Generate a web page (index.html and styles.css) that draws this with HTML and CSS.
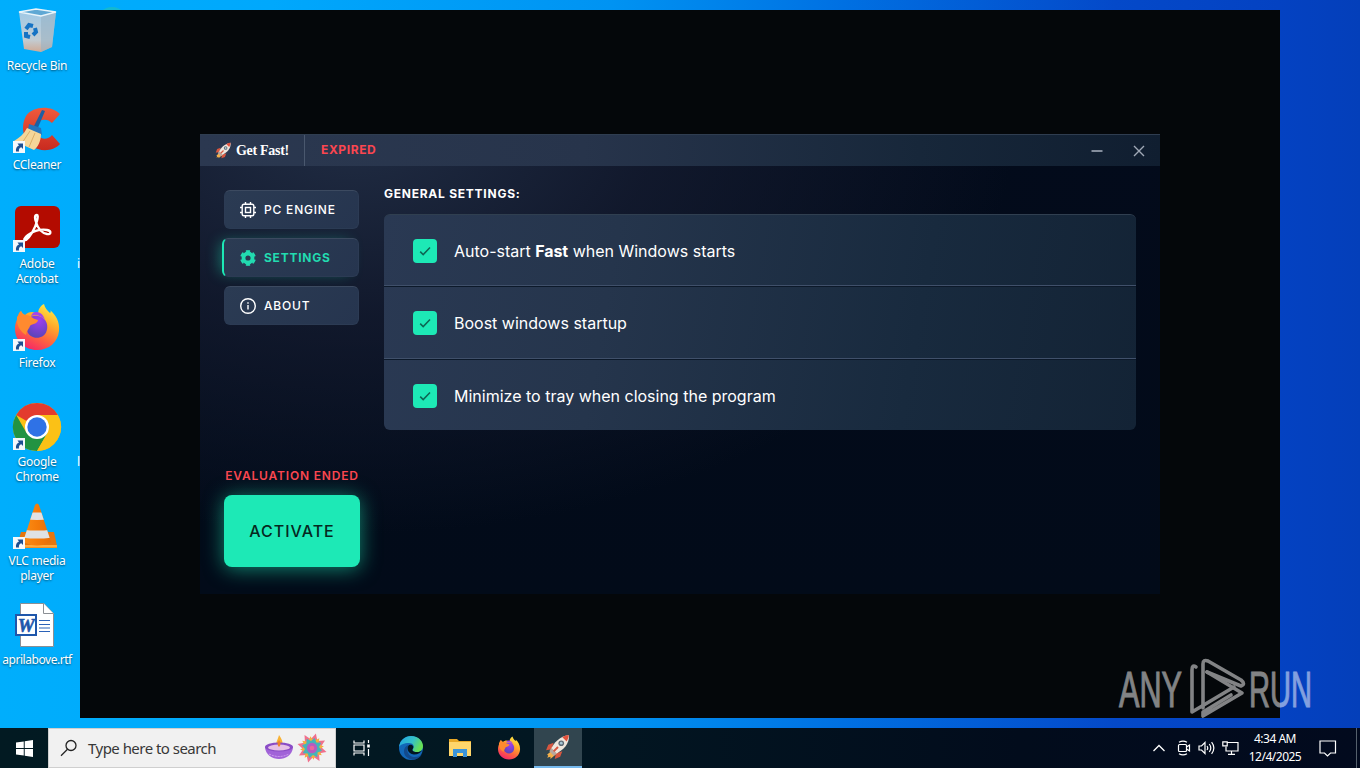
FILE: index.html
```
<!DOCTYPE html>
<html lang="en">
<head>
    <meta charset="UTF-8">
    <meta name="viewport" content="width=device-width, initial-scale=1.0">
    <title>Get Fast!</title>
    <link rel="stylesheet" href="styles.css">
</head>
<body>
    <!-- shared icons -->
    <svg class="defs" width="0" height="0">
        <defs>
            <linearGradient id="foxBody" x1="0.8" y1="0" x2="0.3" y2="1">
                <stop offset="0" stop-color="#fff04a"/>
                <stop offset="0.35" stop-color="#ffae2b"/>
                <stop offset="0.65" stop-color="#ff6a3c"/>
                <stop offset="1" stop-color="#f5246a"/>
            </linearGradient>
            <radialGradient id="foxGlobe" cx="0.6" cy="0.2" r="0.8">
                <stop offset="0" stop-color="#a03df0"/>
                <stop offset="1" stop-color="#5b45b8"/>
            </radialGradient>
            <linearGradient id="edgeTop" x1="0" y1="0" x2="1" y2="0.4">
                <stop offset="0" stop-color="#1fa4e4"/>
                <stop offset="0.6" stop-color="#35c1c8"/>
                <stop offset="1" stop-color="#66e055"/>
            </linearGradient>
            <linearGradient id="ccRed" x1="0" y1="0" x2="0" y2="1">
                <stop offset="0" stop-color="#ef5a3c"/>
                <stop offset="1" stop-color="#c92a1f"/>
            </linearGradient>
            <linearGradient id="bin" x1="0" y1="0" x2="0" y2="1">
                <stop offset="0" stop-color="#9fc9e6"/>
                <stop offset="0.7" stop-color="#c3ccd2"/>
                <stop offset="1" stop-color="#cfa994"/>
            </linearGradient>
            <linearGradient id="cone" x1="0" y1="0" x2="1" y2="0">
                <stop offset="0" stop-color="#ff9a1c"/>
                <stop offset="0.5" stop-color="#f57c0a"/>
                <stop offset="1" stop-color="#d9650a"/>
            </linearGradient>
            <clipPath id="coneClip"><path d="M22 2q2-3 4 0l12 37q-14 7-28 0z"/></clipPath>
            <symbol id="firefox" viewBox="0 0 48 48">
                <path d="M31 1c1 4 3 6 6 9 1-1 1-2 0-3 6 5 10 12 9 21-1 11-10 19-22 19S2 38 2 26c0-6 2-10 4-12 0-2 1-4 2-6 1 2 2 3 4 4 2-2 4-3 7-3 2 0 4 1 6 2 0-4 2-8 6-10z" fill="url(#foxBody)"/>
                <path d="M16 15c4-3 11-3 15 1 5 4 4 14-1 17-6 4-15 1-16-6-1-5 0-8 2-12z" fill="url(#foxGlobe)"/>
                <path d="M4 14c2-2 1-4 4-6 1 3 3 4 5 4 4 0 5 3 12 5 0 4-7 4-8 6-1 3-3 4-4 9-5-3-10-9-9-18z" fill="#ff8a2f"/>
                <path d="M18 13c5-2 11 0 14 4-2-6-5-8-9-8-3 0-4 2-5 4z" fill="#a545ea"/>
            </symbol>
            <symbol id="rocket" viewBox="0 0 24 24">
                <path d="M8 14 2 19l1 1-1 2 3-1 0 2 7-6z" fill="#f5b04a"/>
                <path d="m8 8-5 2-2 5 5-1zM16 16l-2 5-5 2 1-5z" fill="#d8563f"/>
                <path d="M5 15C8 8 14 2 22 1c1 8-5 14-13 18z" fill="#efe6dc"/>
                <path d="M16 3q3-2 6-2 0 3-2 6z" fill="#e2523d"/>
                <path d="m6 13 5 5-3 2-4-4z" fill="#b9a79c"/>
                <circle cx="15" cy="8.5" r="2.6" fill="#5d6974"/>
                <circle cx="15" cy="8.5" r="1.3" fill="#a9c6d4"/>
                <path d="m8 16 4-4" stroke="#d8563f" stroke-width="1.8"/>
            </symbol>
            <symbol id="shortcut" viewBox="0 0 12 12">
                <path d="M0 0h12v12H0z" fill="#f4f8fb"/>
                <path d="M3 10.500C2.500 7 4 5 6 4.500L4.500 2.500H10v5.500L8.300 6.200C6.500 6.800 5.500 8 6 10.500z" fill="#1d4f91"/>
            </symbol>
            <symbol id="check" viewBox="0 0 24 24">
                <path d="m7.200 12.600 3 3 6.800-7" fill="none" stroke="#0d6653" stroke-width="1.500"/>
            </symbol>
        </defs>
    </svg>

    <div class="desktop">
        <div class="icons">
            <div class="shortcut">
                <svg width="48" height="48" viewBox="0 0 48 48">
                    <path d="M6 4 28 8l15-4-4 35-11 5-17-3z" fill="url(#bin)"/>
                    <path d="M28 8 43 4l-4 35-11 5z" fill="#98b2c4" opacity=".6"/>
                    <path d="m6 4 22 4 15-4L23 1z" fill="#5fa8d4" stroke="#e9f4fa" stroke-width="1.300"/>
                    <g fill="none" stroke="#1673c4" stroke-width="4">
                        <path d="m13 21 3-4 4 1M22 20l1 4-3 3M17 29l-4-1 0-4"/>
                    </g>
                </svg>
                <span>Recycle Bin</span>
            </div>
            <div class="shortcut">
                <svg width="48" height="48" viewBox="0 0 48 48">
                    <path d="M47 7C38-2 20-1 13 9c-7 13-1 30 12 33 8 3 18 0 22-5l-8-9c-4 5-11 5-14 0-4-5-2-13 4-15 4-1 7 0 10 3z" fill="url(#ccRed)"/>
                    <path d="m29 3 3 1-8 19-4-2z" fill="#1d5fa3"/>
                    <path d="m16 17 12 4 1 7-14-5z" fill="#2675bd"/>
                    <path d="M14 21 28 27C28 34 25 40 21 43L1 34C6 31 11 27 14 21z" fill="#f5d699"/>
                    <path d="m17 24-8 12M22 26l-6 14" stroke="#dcae66"/>
                    <use href="#shortcut" x="0" y="34" width="12" height="12"/>
                </svg>
                <span>CCleaner</span>
            </div>
            <div class="shortcut">
                <svg width="48" height="48" viewBox="0 0 48 48">
                    <rect x="2" y="0" width="45" height="42" rx="6" fill="#b30b00"/>
                    <path d="M24 9c-3 0-2 4-1 7 2 7 6 11 11 12 4 1 5-3 0-4-6-1-13 1-19 5-4 3-5 6-2 5 4-3 9-11 11-19 1-4 1-6 0-6z" fill="none" stroke="#fff" stroke-width="2.300"/>
                    <use href="#shortcut" x="0" y="34" width="12" height="12"/>
                </svg>
                <span>Adobe<br>Acrobat</span>
            </div>
            <div class="shortcut">
                <svg width="48" height="48" viewBox="0 0 48 48">
                    <use href="#firefox" x="0" y="-2" width="48" height="48"/>
                    <use href="#shortcut" x="0" y="34" width="12" height="12"/>
                </svg>
                <span>Firefox</span>
            </div>
            <div class="shortcut">
                <svg width="48" height="48" viewBox="0 0 48 48">
                    <circle cx="24" cy="23" r="24" fill="#fbc116"/>
                    <path d="M24 23 3.200 11A24 24 0 0 1 44.800 11z" fill="#e33b2e"/>
                    <path d="M3.200 11A24 24 0 0 0 24 47L34.400 29 24 23 13.600 29z" fill="#229342"/>
                    <path d="M24 11h20.800A24 24 0 0 1 24 47l10.400-18z" fill="#fbc116"/>
                    <circle cx="24" cy="23" r="12" fill="#fff"/>
                    <circle cx="24" cy="23" r="9.700" fill="#2f72e6"/>
                    <use href="#shortcut" x="0" y="34" width="12" height="12"/>
                </svg>
                <span>Google<br>Chrome</span>
            </div>
            <div class="shortcut">
                <svg width="48" height="48" viewBox="0 0 48 48">
                    <path d="M8 29h33l3 14v2H4v-2z" fill="#e5760f"/>
                    <path d="M4 42h40v2.500H4z" fill="#ffab3d"/>
                    <g clip-path="url(#coneClip)">
                        <path d="M0 0h48v48H0z" fill="url(#cone)"/>
                        <path d="M0 7q24 5 48 0v8q-24 4-48 0zM0 25q24 5 48 0v8q-24 5-48 0z" fill="#dfe2e4"/>
                    </g>
                    <use href="#shortcut" x="0" y="34" width="12" height="12"/>
                </svg>
                <span>VLC media<br>player</span>
            </div>
            <div class="shortcut">
                <svg width="48" height="48" viewBox="0 0 48 48">
                    <path d="M7.500 1.500H31l9.500 10V44.500H7.500z" fill="#fff" stroke="#8b8f94"/>
                    <path d="M30.500 1.500v10h10" fill="#fff" stroke="#8b8f94"/>
                    <path d="M26 18.500h11M26 22.500h11M26 26h11M26 29.500h11" stroke="#2b62b8" stroke-width="1.200"/>
                    <rect x="3" y="13" width="20" height="20" fill="#fff" stroke="#1f57ab" stroke-width="2"/>
                    <text class="word-w" x="13" y="29.500" text-anchor="middle">W</text>
                </svg>
                <span class="file-name">aprilabove.rtf</span>
            </div>
        </div>

        <!-- icons of the second column, mostly behind the window -->
        <div class="behind behind-dot"></div>
        <div class="behind behind-i">i</div>
        <div class="behind behind-l">l</div>

        <div class="backdrop">
            <div class="app">
                <header class="titlebar">
                    <div class="brand">
                        <svg width="17" height="17"><use href="#rocket"/></svg>
                        <span>Get Fast!</span>
                    </div>
                    <div class="license">EXPIRED</div>
                    <div class="controls">
                        <svg width="12" height="12" viewBox="0 0 12 12"><path d="M.5 6h11" stroke="#a0a9b7" stroke-width="1.600"/></svg>
                        <svg width="12" height="12" viewBox="0 0 12 12"><path d="m1 1 10 10M11 1 1 11" stroke="#a0a9b7" stroke-width="1.400"/></svg>
                    </div>
                </header>
                <div class="content">
                    <aside class="sidebar">
                        <nav class="menu">
                            <a class="menu-item">
                                <svg width="16" height="16" viewBox="0 0 16 16" fill="none" stroke="#fff" stroke-width="1.400">
                                    <rect x="2.200" y="2.200" width="11.600" height="11.600" rx="1.800"/>
                                    <rect x="5.500" y="5.500" width="5" height="5"/>
                                    <path d="M5.500 0v2M10.500 0v2M5.500 14v2M10.500 14v2M0 5.500h2M0 10.500h2M14 5.500h2M14 10.500h2"/>
                                </svg>
                                <span>PC ENGINE</span>
                            </a>
                            <a class="menu-item active">
                                <svg width="16" height="16" viewBox="0 0 16 16" fill="none" stroke="#22dbb0">
                                    <circle cx="8" cy="8" r="4.500" stroke-width="3.800"/>
                                    <path d="M8 .8v2.700M8 12.500v2.700M1.800 4.400l2.300 1.400M11.900 10.200l2.300 1.400M1.800 11.600l2.300-1.400M11.900 5.800l2.300-1.400" stroke-width="3.500" stroke-linejoin="round"/>
                                    <path d="M6.500 1h3M6.500 15h3M1.300 5.700l1.500-2.600M13.200 12.900l1.500-2.600M1.300 10.300l1.500 2.600M13.200 3.100l1.500 2.600" stroke-width="1.600" stroke-linecap="round"/>
                                </svg>
                                <span>SETTINGS</span>
                            </a>
                            <a class="menu-item">
                                <svg width="16" height="16" viewBox="0 0 16 16" fill="none" stroke="#fff" stroke-width="1.400">
                                    <circle cx="8" cy="8" r="7.300"/>
                                    <path d="M8 7v4.500M8 4.300v1.500"/>
                                </svg>
                                <span>ABOUT</span>
                            </a>
                        </nav>
                        <div class="evaluation">EVALUATION ENDED</div>
                        <button class="activate">ACTIVATE</button>
                    </aside>
                    <main class="settings">
                        <h1>GENERAL SETTINGS:</h1>
                        <div class="options">
                            <label class="option">
                                <svg class="box" width="24" height="24"><use href="#check"/></svg>
                                <span>Auto-start <b>Fast</b> when Windows starts</span>
                            </label>
                            <label class="option">
                                <svg class="box" width="24" height="24"><use href="#check"/></svg>
                                <span>Boost windows startup</span>
                            </label>
                            <label class="option">
                                <svg class="box" width="24" height="24"><use href="#check"/></svg>
                                <span>Minimize to tray when closing the program</span>
                            </label>
                        </div>
                    </main>
                </div>
            </div>
        </div>

        <svg class="watermark" width="220" height="72" viewBox="0 0 220 72">
            <g class="watermark-text">
                <text x="3" y="51" textLength="63" lengthAdjust="spacingAndGlyphs">ANY</text>
                <text x="133" y="51" textLength="63" lengthAdjust="spacingAndGlyphs">RUN</text>
            </g>
            <g fill="none" stroke="#fff" stroke-width="3.600" stroke-linejoin="round" stroke-linecap="round">
                <path d="M80 11q-4-3-4 3v42l42-25"/>
                <path d="M87 52V8q0-5 5-3l33 19q5 4 0 6L91 16"/>
                <path d="M91 16l35 21-39 23v-4l28-17"/>
            </g>
        </svg>
    </div>

    <footer class="taskbar">
        <div class="start">
            <svg width="17" height="17" viewBox="0 0 16 16"><path d="M0 2.300 7.300 1.300v6.200H0zM8.200 1.200 16 0v7.500H8.200zM0 8.400h7.300v6.300L0 13.700zM8.200 8.400H16V16l-7.800-1.100z" fill="#fff"/></svg>
        </div>
        <div class="search">
            <svg width="18" height="18" viewBox="0 0 18 18" fill="none" stroke="#222" stroke-width="1.300"><circle cx="11" cy="6.500" r="5"/><path d="M7.500 10.300 1 16.800"/></svg>
            <span>Type here to search</span>
            <svg class="diya" width="30" height="26" viewBox="0 0 30 26">
                <path d="M14 12c-4-3 0-7 1-12 4 6 5 9 1 12z" fill="#f9b233"/>
                <path d="M1 12c1 16 27 16 28 0z" fill="#a163d8"/>
                <ellipse cx="15" cy="12" rx="14" ry="4.500" fill="#8a4cc6"/>
                <ellipse cx="15" cy="12.500" rx="11" ry="3" fill="#e6c0e6"/>
                <path d="M15 5q-3 4 0 7 3-3 0-7z" fill="#f0812a"/>
                <path d="M5 19q10 5 20 0" fill="none" stroke="#d5a4f3" stroke-dasharray="2 1"/>
            </svg>
            <svg class="flower" width="30" height="30" viewBox="-16 -16 32 32">
                <g fill="#f0708c" transform="rotate(15)">
                    <path id="petal" d="M-4-8 0-16 4-8 0 0z"/>
                    <use href="#petal" transform="rotate(45)"/>
                    <use href="#petal" transform="rotate(90)"/>
                    <use href="#petal" transform="rotate(135)"/>
                    <use href="#petal" transform="rotate(180)"/>
                    <use href="#petal" transform="rotate(225)"/>
                    <use href="#petal" transform="rotate(270)"/>
                    <use href="#petal" transform="rotate(315)"/>
                </g>
                <path d="M0-13 3-7 9-9 7-3 13 0 7 3 9 9 3 7 0 13-3 7-9 9-7 3-13 0-7-3-9-9-3-7z" fill="#f2b13c" transform="rotate(37)"/>
                <path d="M0-11 3-7 8-8 7-3 11 0 7 3 8 8 3 7 0 11-3 7-8 8-7 3-11 0-7-3-8-8-3-7z" fill="#45b5b8" transform="rotate(15)"/>
                <circle r="5.500" fill="#b75bc0"/>
                <circle r="2.500" fill="#ec669b"/>
            </svg>
        </div>
        <div class="task">
            <svg width="18" height="16" viewBox="0 0 18 16" fill="none" stroke="#fff" stroke-width="1.200"><path d="M1 .5v2.500h10V.5M1 15.500V13h10v2.500M1 5h10v6H1zM15.500 0v3M15.500 9v7"/><path d="M14.200 4.500h2.600v3h-2.600z" fill="#fff" stroke="none"/></svg>
        </div>
        <div class="task">
            <svg width="24" height="24" viewBox="0 0 24 24">
                <circle cx="12" cy="12" r="12" fill="#1267b8"/>
                <path d="M0 11C1 4 6 0 12 0c8 0 12 6 12 10 0 4-3 6-6 6-4 0-5-2-4-3 2-3 0-6-4-6C5 7 1 9 0 11z" fill="url(#edgeTop)"/>
                <path d="M10 9c-4 4-1 12 6 12 3 0 5-1 7-3-3 6-10 7-14 4C3 19 4 10 10 9z" fill="#134a8c"/>
                <path d="M13.700 13c2-3-1-5-3.500-4-3 2-2 9 4.800 9.500 4 0 7-2 8.500-4.500-2 1.800-4 2.300-6 2-3 0-5-1.500-3.800-3z" fill="#021620"/>
            </svg>
        </div>
        <div class="task">
            <svg width="22" height="20" viewBox="0 0 22 20"><path d="M0 1h8l2 2h12v15H0z" fill="#e9a926"/><path d="M0 4h22v14H0z" fill="#ffd66b"/><path d="M4 19v-8h14v8h-4v-4H8v4z" fill="#3b94d9"/></svg>
        </div>
        <div class="task">
            <svg width="24" height="24"><use href="#firefox"/></svg>
        </div>
        <div class="task running">
            <svg width="26" height="26"><use href="#rocket"/></svg>
        </div>
        <div class="tray">
            <svg width="12" height="8" viewBox="0 0 12 8" fill="none" stroke="#fff" stroke-width="1.300"><path d="m.5 7 5.500-5.500L11.500 7"/></svg>
            <svg width="14" height="16" viewBox="0 0 14 16" fill="none" stroke="#fff" stroke-width="1.200"><rect x="1.500" y="4.500" width="8" height="7" rx="1"/><path d="m9.500 7 3-2v6l-3-2M2 2.200Q6 0 10 2.200M2 13.800q4 2.200 8 0"/></svg>
            <svg width="17" height="14" viewBox="0 0 17 14" fill="none" stroke="#fff" stroke-width="1.200"><path d="M1 5h2.500L7 1.500v11L3.500 9H1zM9 5q1.500 2 0 4M11.300 3q3 4 0 8M13.600 1.200q4.500 5.800 0 11.600"/></svg>
            <svg width="17" height="14" viewBox="0 0 17 14" fill="none" stroke="#fff" stroke-width="1.200"><path d="M5 1.500h11v8.500H4V5.500M9.500 10v3M6 13.300h7"/><path d="M.8.800h4.400v4H.8z"/></svg>
            <div class="clock"><span>4:34 AM</span><span>12/4/2025</span></div>
            <svg class="notify" width="18" height="17" viewBox="0 0 18 17" fill="none" stroke="#fff" stroke-width="1.200"><path d="M1 1h15.500v12H11.500l-3 3-3-3H1z"/></svg>
        </div>
    </footer>
</body>
</html>
```

FILE: styles.css
```
* {
    box-sizing: border-box;
}
body {
    margin: 0;
    width: 1360px;
    height: 768px;
    overflow: hidden;
    display: flex;
    flex-direction: column;
    font-family: 'Noto Sans', sans-serif;
}
svg {
    display: block;
    flex-shrink: 0;
}
.defs {
    position: absolute;
}
.desktop {
    position: relative;
    height: 728px;
    background: linear-gradient(90deg, #00aefc 0%, #00a8fc 20%, #0093f2 45%, #0070e2 62%, #0449c9 82%, #0442c2 94%, #043fba 100%);
}

/* desktop icons */
.icons {
    width: 74px;
    padding-top: 8px;
}
.shortcut {
    height: 99px;
    display: flex;
    flex-direction: column;
    align-items: center;
    text-align: center;
    color: #fff;
    font-size: 12px;
    line-height: 15px;
    letter-spacing: -0.25px;
    text-shadow: 0 1px 2px rgba(0, 0, 0, 0.55);
    white-space: nowrap;
}
.shortcut svg {
    overflow: visible;
}
.shortcut span {
    margin-top: 2px;
}
.shortcut .file-name {
    letter-spacing: -0.45px;
}
.word-w {
    font: italic bold 19px 'Liberation Serif', serif;
    fill: #1f57ab;
    stroke: #1f57ab;
    stroke-width: 0.6px;
    text-shadow: none;
}
.behind {
    position: absolute;
    color: #fff;
    font-size: 12px;
    line-height: 15px;
}
.behind-dot {
    left: 96px;
    top: 7px;
    width: 32px;
    height: 32px;
    border-radius: 50%;
    background: #14b8d0;
}
.behind-i {
    left: 77px;
    top: 256px;
}
.behind-l {
    left: 77px;
    top: 454px;
}

/* app window */
.backdrop {
    position: absolute;
    left: 80px;
    top: 10px;
    width: 1200px;
    height: 708px;
    padding: 124px 120px;
    background: #04070a;
}
.app {
    width: 960px;
    height: 460px;
    font-family: 'Inter', sans-serif;
    color: #fff;
    background:
        radial-gradient(ellipse 660px 400px at 16% 0%, #202c43 0%, rgba(22, 29, 50, 0.75) 45%, rgba(10, 15, 35, 0) 100%),
        linear-gradient(180deg, #030b1b, #020b19);
}
.titlebar {
    height: 32px;
    display: flex;
    align-items: stretch;
    background: linear-gradient(90deg, #2b3850 0%, #27344b 40%, #17273a 75%, #101e30 100%);
    border-top: 1px solid #2f3d50;
}
.brand {
    width: 105px;
    padding-left: 15px;
    display: flex;
    align-items: center;
    gap: 4px;
    border-right: 1px solid #4a586e;
    font: bold 14px 'Liberation Serif', serif;
    letter-spacing: -0.3px;
    white-space: nowrap;
}
.license {
    padding-left: 16px;
    line-height: 30px;
    font-size: 12px;
    font-weight: 700;
    letter-spacing: 0.6px;
    color: #fb4650;
}
.controls {
    margin-left: auto;
    padding-right: 15px;
    display: flex;
    align-items: center;
    gap: 30px;
}
.content {
    height: 428px;
    padding: 24px 24px 27px;
    display: flex;
    gap: 24px;
}
.sidebar {
    width: 136px;
    display: flex;
    flex-direction: column;
}
.menu {
    display: flex;
    flex-direction: column;
    gap: 9px;
}
.menu-item {
    width: 135px;
    height: 39px;
    padding-left: 15px;
    display: flex;
    align-items: center;
    gap: 8px;
    font-size: 12px;
    font-weight: 500;
    letter-spacing: 0.8px;
    background: linear-gradient(135deg, #2b3b53, #26354f);
    border: 1px solid #2c3b54;
    border-top-color: #3c4a60;
    border-radius: 6px;
}
.menu-item.active {
    width: 137px;
    margin-left: -2px;
    color: #22dbb0;
    font-weight: 700;
    letter-spacing: 0.75px;
    border-left: 2px solid #1de9b6;
    padding-left: 16px;
    box-shadow: -6px 0 14px -4px rgba(29, 233, 182, 0.4);
}
.evaluation {
    margin-top: auto;
    margin-bottom: 12px;
    text-align: center;
    white-space: nowrap;
    font-size: 12px;
    line-height: 15px;
    font-weight: 600;
    letter-spacing: 0.82px;
    color: #fb4650;
}
.activate {
    height: 72px;
    padding: 0;
    border: none;
    border-radius: 8px;
    background: #1de9b6;
    color: #06281f;
    font-family: 'Inter', sans-serif;
    font-size: 16px;
    font-weight: 500;
    letter-spacing: 1px;
    box-shadow: 0 2px 20px rgba(29, 233, 182, 0.55);
}
.settings {
    flex: 1;
}
h1 {
    margin: -4px 0 12px;
    font-size: 12px;
    line-height: 16px;
    font-weight: 700;
    letter-spacing: 0.75px;
}
.options {
    height: 216px;
    border-radius: 6px;
    background: linear-gradient(100deg, #2a3953 0%, #25354c 30%, #182a3e 70%, #132335 100%);
    border-top: 1px solid #303f50;
    overflow: hidden;
}
.option {
    height: 73px;
    padding-left: 29px;
    display: flex;
    align-items: center;
    gap: 17px;
    font-size: 16px;
}
.option:first-child {
    height: 71px;
}
.option + .option {
    border-top: 1px solid #0c192a;
    box-shadow: 0 -1px 0 #40506a;
}
.option b {
    font-weight: 700;
    letter-spacing: -0.1px;
}
.box {
    border-radius: 4px;
    background: #1de9b6;
}

.watermark {
    position: absolute;
    left: 1116px;
    top: 656px;
    opacity: 0.5;
}
.watermark-text {
    font: 50px 'Liberation Sans', sans-serif;
    fill: #fff;
    stroke: #fff;
    stroke-width: 1px;
}

/* taskbar */
.taskbar {
    height: 40px;
    display: flex;
    align-items: stretch;
    color: #fff;
    background: linear-gradient(90deg, #021a22 0%, #021722 40%, #020c1c 75%, #020a1e 100%);
}
.start,
.task {
    width: 49px;
    display: flex;
    align-items: center;
    justify-content: center;
}
.start {
    width: 48px;
}
.search {
    width: 288px;
    padding: 0 8px 0 11px;
    margin-right: 1px;
    display: flex;
    align-items: center;
    background: #f1f1f1;
    border: 1px solid #cfcfcf;
    color: #383838;
    font-size: 15px;
    letter-spacing: -0.53px;
}
.search span {
    margin-left: 10px;
    white-space: nowrap;
}
.diya {
    margin-left: auto;
    margin-right: 3px;
}
.running {
    width: 48px;
    margin-left: 1px;
    background: #31454f;
    border-bottom: 2px solid #76b9ed;
}
.tray {
    margin-left: auto;
    width: 208px;
    display: flex;
    align-items: center;
    border-right: 1px solid #55606c;
    margin-right: 3px;
}
.tray svg + svg {
    margin-left: 7px;
}
.tray svg:first-child {
    margin-left: 4px;
}
.tray svg:nth-child(2) {
    margin-left: 12px;
}
.clock {
    width: 64px;
    margin-left: 4px;
    display: flex;
    flex-direction: column;
    align-items: center;
    font-size: 12px;
    line-height: 18px;
    letter-spacing: -0.5px;
}
.notify {
    margin-left: 12px;
}
```
